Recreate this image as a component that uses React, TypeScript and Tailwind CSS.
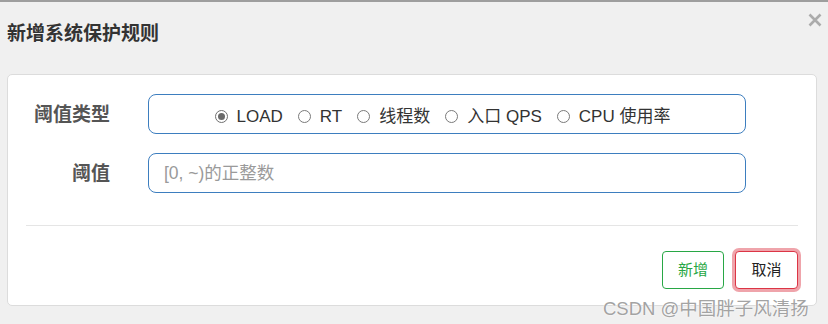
import React, { useState } from "react";

const font = "font-['Liberation_Sans','Noto_Sans_CJK_SC',sans-serif]";

const types = ["LOAD", "RT", "线程数", "入口 QPS", "CPU 使用率"];

function Radio({ label, checked, onClick }: { label: string; checked: boolean; onClick: () => void }) {
  return (
    <label className="flex items-center mr-[15px] last:mr-0 cursor-pointer" onClick={onClick}>
      <span
        className={
          "w-[13px] h-[13px] rounded-full border flex items-center justify-center bg-white " +
          (checked ? "border-[#6f6f6f] border-[1.5px]" : "border-[#7a7a7a]")
        }
      >
        {checked && <span className="w-[7px] h-[7px] rounded-full bg-[#6a6a6a]" />}
      </span>
      <span className="ml-[9px]">{label}</span>
    </label>
  );
}

function App() {
  const [type, setType] = useState(0);
  const [value, setValue] = useState("");

  return (
    <div className={`relative w-[828px] h-[324px] overflow-hidden bg-[#f0f0f0] border-t-2 border-[#9e9e9e] ${font}`}>
      <div className="flex justify-between items-start pl-[7px] pr-[6px]">
        <h3 className="mt-[19px] text-[19px] leading-[26px] font-bold text-[#333]">新增系统保护规则</h3>
        <button className="mt-[11px] w-[14px] h-[14px]">
          <svg viewBox="0 0 14 14" className="w-[14px] h-[14px]">
            <path d="M1.5 1.5 L12.5 12.5 M12.5 1.5 L1.5 12.5" stroke="#ababab" strokeWidth="2.6" />
          </svg>
        </button>
      </div>

      <div className="ml-[7px] mt-[27px] w-[810px] h-[232px] bg-white border border-[#dcdcdc] rounded-[5px] pt-[19px]">
        <div className="flex items-center h-[40px]">
          <div className="w-[102px] pt-[3px] text-right text-[19px] font-bold text-[#555]">阈值类型</div>
          <div className="ml-[38px] w-[598px] h-[40px] border border-[#3d7ebf] rounded-[8px] flex items-center justify-center pt-[5px] pr-[9px] text-[17px] text-[#333]">
            {types.map((t, i) => (
              <Radio key={t} label={t} checked={type === i} onClick={() => setType(i)} />
            ))}
          </div>
        </div>

        <div className="flex items-center h-[40px] mt-[19px]">
          <div className="w-[102px] pt-[2px] text-right text-[19px] font-bold text-[#555]">阈值</div>
          <input
            value={value}
            onChange={(e) => setValue(e.target.value)}
            placeholder="[0, ~)的正整数"
            className="ml-[38px] w-[598px] h-[40px] border border-[#3d7ebf] rounded-[8px] px-[15px] text-[17.5px] text-[#333] placeholder:text-[#9a9a9a] outline-none"
          />
        </div>

        <div className="mx-[18px] mt-[32px] border-t border-[#e5e5e5]" />

        <div className="flex justify-end gap-[11px] mr-[18px] mt-[25px]">
          <button className="w-[62px] h-[38px] border border-[#28a745] rounded-[4px] text-[15px] text-[#28a745] bg-white">
            新增
          </button>
          <button className="w-[63px] h-[38px] border border-[#dc3545] rounded-[4px] text-[15px] text-[#222] bg-white ring-[3px] ring-[#dc3545]/45">
            取消
          </button>
        </div>
      </div>

      <div className="absolute left-[603px] top-[295px] text-[18.5px] leading-[24px] text-[#a3a3a3] [text-shadow:0_0_2px_#fff,0_0_1px_#fff]">
        CSDN @中国胖子风清扬
      </div>
    </div>
  );
}

export default App;
